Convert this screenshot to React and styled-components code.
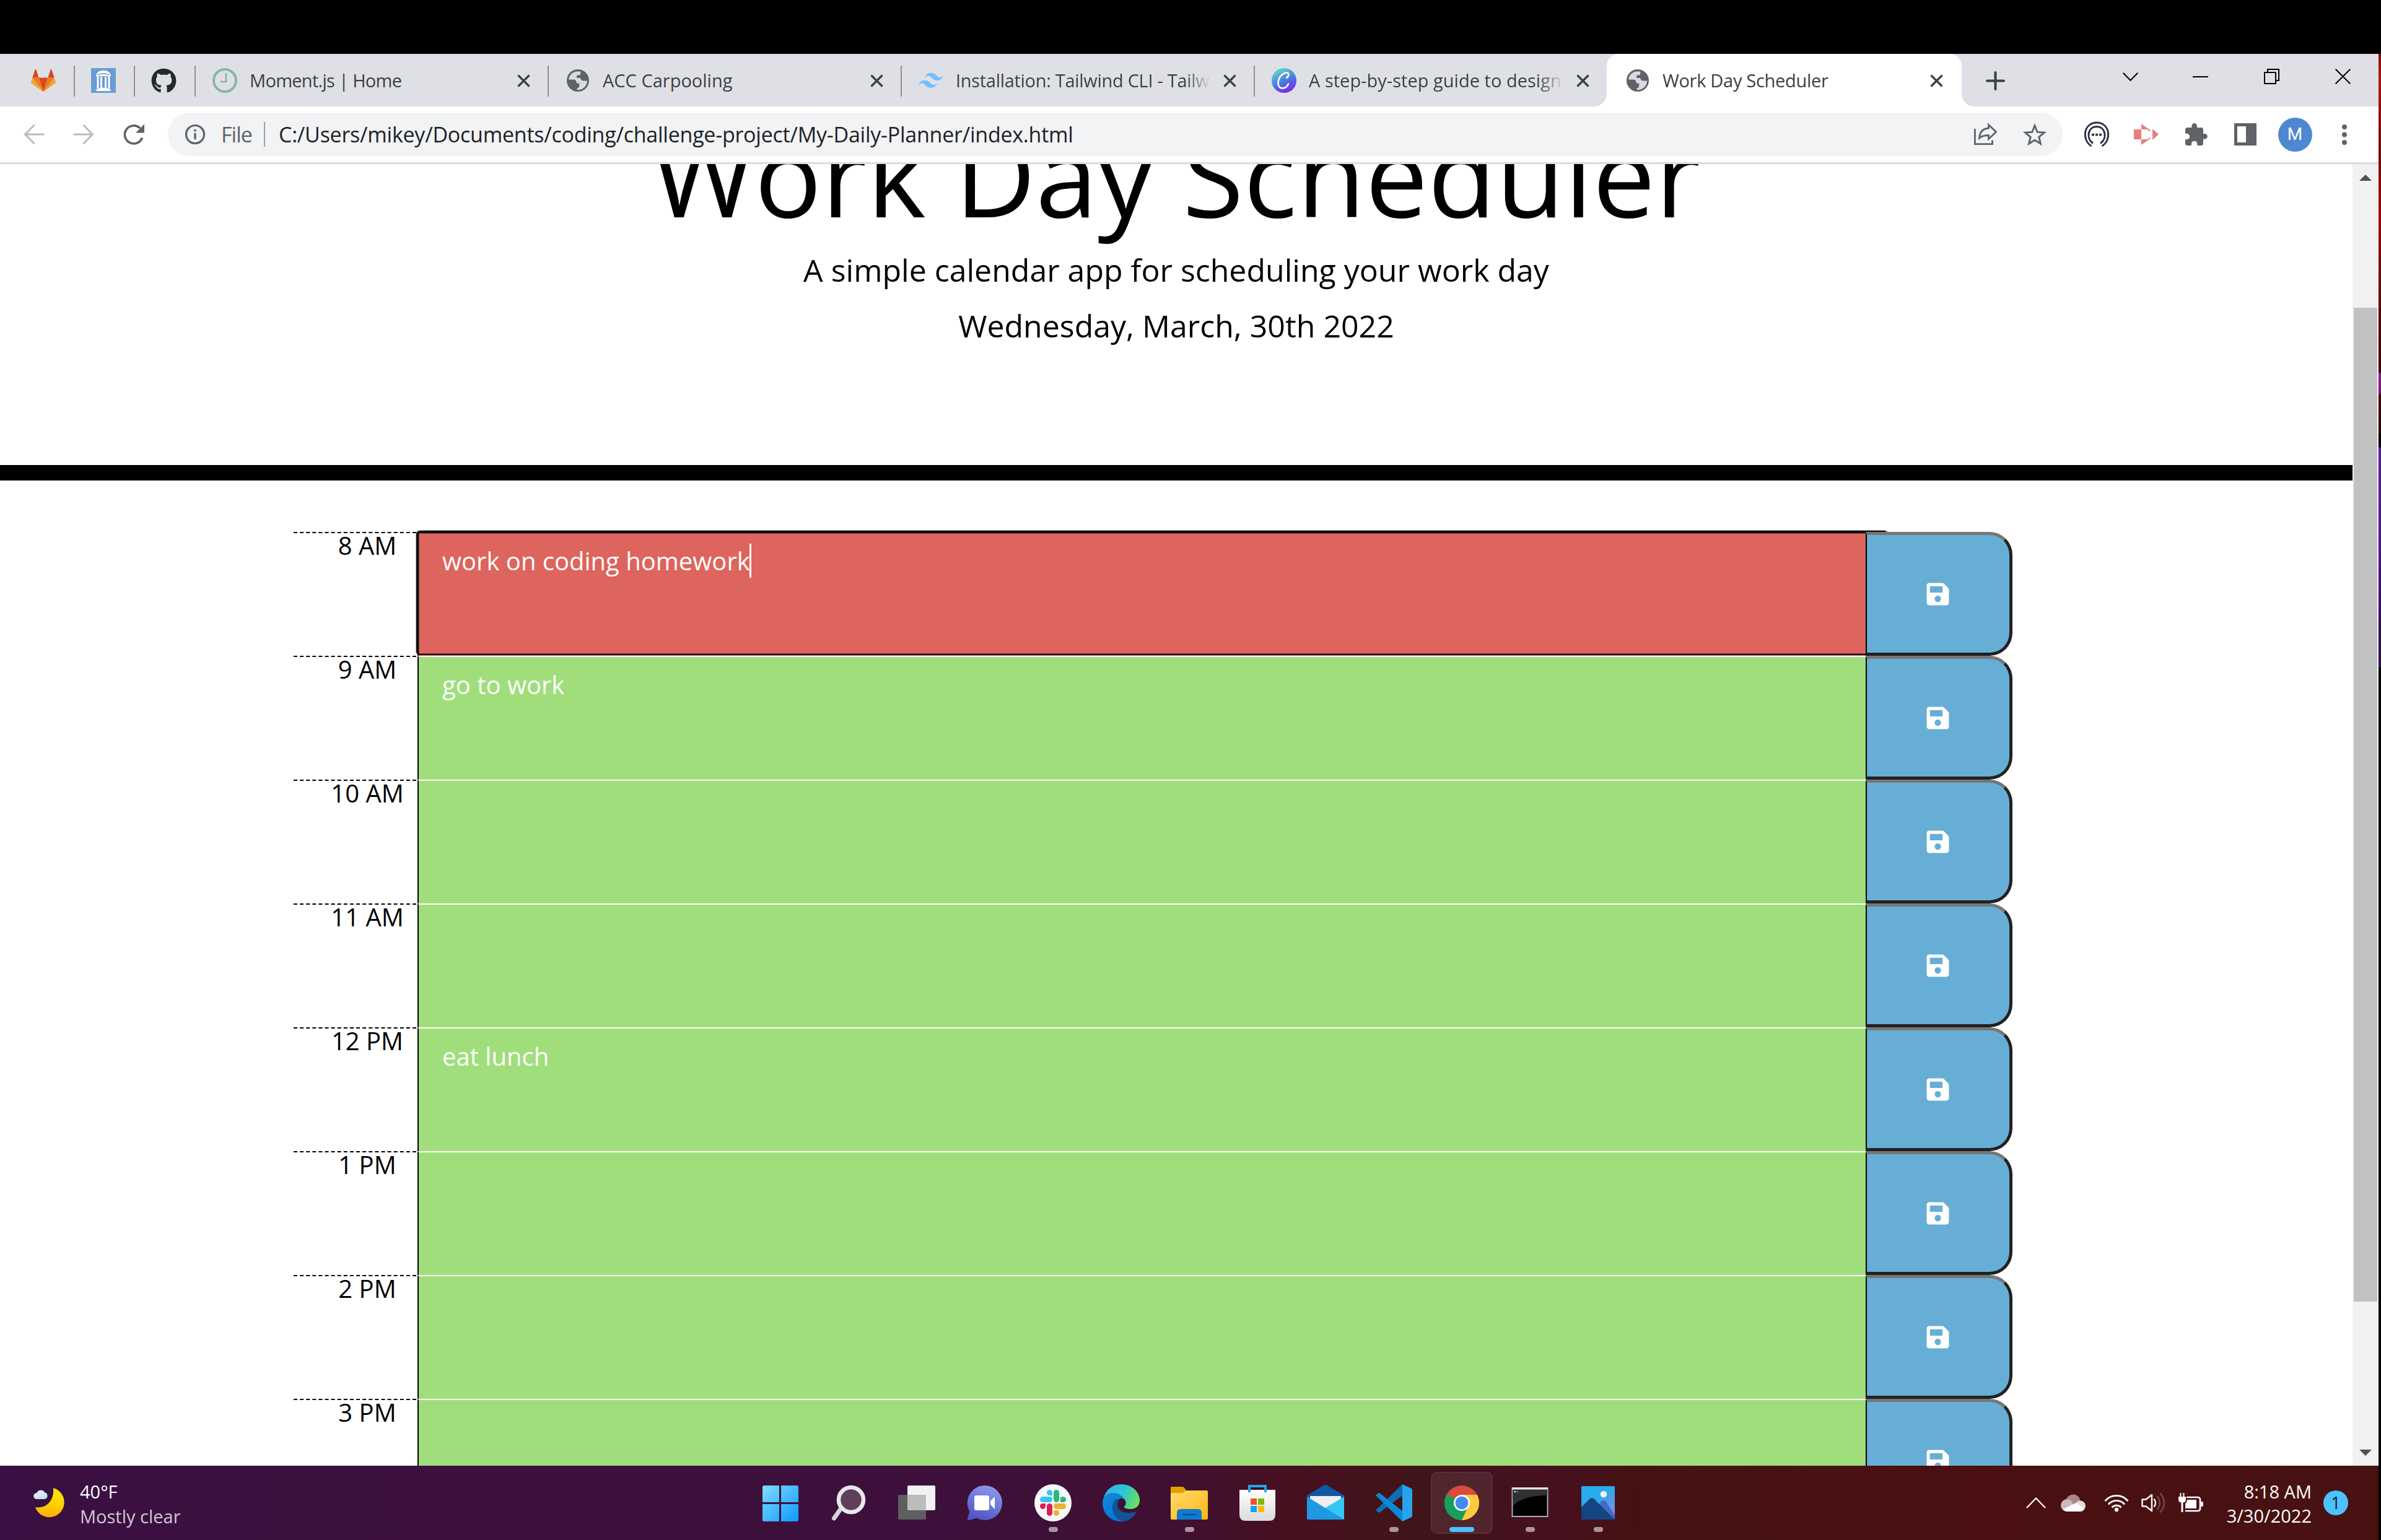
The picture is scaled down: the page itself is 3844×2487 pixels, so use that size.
import React from 'react';
import styled, { createGlobalStyle, css } from 'styled-components';
import { FaSave, FaGithub } from 'react-icons/fa';

const Global = createGlobalStyle`
  *, *::before, *::after { box-sizing: border-box; }
  html, body { margin: 0; padding: 0; background: #000; }
  body { font-family: "Open Sans", "Noto Sans", sans-serif; overflow: hidden; }
  svg { display: block; flex: none; overflow: visible; }
`;

const uiFont = css`
  font-family: "Open Sans", "Noto Sans", sans-serif;
  white-space: pre;
`;

/* ---------- desktop ---------- */
const Desktop = styled.div`
  width: 3844px;
  height: 2487px;
  display: grid;
  grid-template-columns: 3840px 4px;
  grid-template-rows: 87px 2280px 120px;
  overflow: hidden;
  background: #000;
`;
const Letterbox = styled.div`
  grid-column: 1 / -1;
  background: #000;
`;
const WallpaperEdge = styled.div`
  grid-column: 2;
  grid-row: 2 / 4;
  background: linear-gradient(
    #8a0a08 0, #b01a08 40px, #7a0606 150px, #a00c0c 260px, #5a0404 420px, #400404 514px,
    #8a1c90 516px, #7a1878 548px, #450408 551px, #300204 612px, #050005 614px, #050005 634px,
    #5a1c9c 637px, #52148c 800px, #3c0a6a 912px, #341048 915px, #341048 990px, #000 992px
  );
`;

/* ---------- browser ---------- */
const Browser = styled.div`
  display: flex;
  flex-direction: column;
  background: #fff;
  overflow: hidden;
`;
const TabStrip = styled.div`
  height: 85px;
  flex: none;
  display: flex;
  align-items: center;
  background: #dfe0e6;
`;
const PinnedTab = styled.div`
  width: ${(p) => p.$width}px;
  height: 50px;
  margin-top: 3px;
  padding: 0 29px 2px 0;
  display: flex;
  align-items: center;
  justify-content: flex-end;
  border-right: 2px solid #8f9094;
  flex: none;
`;
const Tab = styled.div`
  position: relative;
  flex: none;
  display: flex;
  align-items: center;
  gap: 20px;
  width: ${(p) => (p.$active ? 573 : p.$last ? 568 : 570)}px;
  height: ${(p) => (p.$active ? 85 : 50)}px;
  margin-top: ${(p) => (p.$active ? 0 : 3)}px;
  padding: 0 25px 2px 27px;
  border-right: 2px solid ${(p) => (p.$last ? 'transparent' : '#8f9094')};
  ${(p) =>
    p.$active &&
    css`
      padding: 1px 30px 0 30px;
      border-right: 0;
      background: #fff;
      border-radius: 20px 20px 0 0;
      &::before,
      &::after {
        content: '';
        position: absolute;
        bottom: 0;
        width: 20px;
        height: 20px;
      }
      &::before {
        right: 100%;
        background: radial-gradient(circle at 0 0, transparent 19.5px, #fff 20px);
      }
      &::after {
        left: 100%;
        background: radial-gradient(circle at 100% 0, transparent 19.5px, #fff 20px);
      }
    `}
`;
const TabTitle = styled.span`
  ${uiFont}
  width: 412px;
  flex: none;
  overflow: hidden;
  color: #3c4043;
  font-size: 29px;
  line-height: 44px;
  letter-spacing: ${(p) => p.$track || 0}px;
  ${(p) => p.$fade && css`mask-image: linear-gradient(90deg, #000 370px, transparent 412px);`}
`;
const NewTab = styled.div`
  margin: 0 0 0 39px;
  padding-top: 2px;
`;
const WindowControls = styled.div`
  margin-left: auto;
  align-self: flex-start;
  display: flex;
  height: 73px;
`;
const ControlButton = styled.div`
  width: ${(p) => p.$width || 115}px;
  display: grid;
  place-items: center;
`;

const Toolbar = styled.div`
  height: 93px;
  flex: none;
  display: flex;
  align-items: center;
  border-bottom: 3px solid #dadce0;
  background: #fff;
`;
const NavButtons = styled.div`
  display: flex;
  gap: 40px;
  margin: 0 36px 0 35px;
`;
const Omnibox = styled.div`
  width: 3059px;
  height: 70px;
  padding: 0 5px 0 26px;
  display: flex;
  align-items: center;
  border-radius: 35px;
  background: #f1f3f4;
`;
const Scheme = styled.span`
  ${uiFont}
  width: 48px;
  margin-left: 24px;
  color: #5f6368;
  font-size: 34px;
  line-height: 50px;
  letter-spacing: -1px;
`;
const OmniDivider = styled.span`
  width: 2px;
  height: 40px;
  margin: 0 22px 0 21px;
  background: #9aa0a6;
`;
const Url = styled.span`
  ${uiFont}
  flex: 1;
  color: #202124;
  font-size: 34px;
  line-height: 50px;
  letter-spacing: -0.24px;
`;
const ToolSlot = styled.div`
  width: 80px;
  height: 70px;
  flex: none;
  display: grid;
  place-items: center;
`;
const Extensions = styled.div`
  display: flex;
  margin-left: 15px;
`;
const Avatar = styled.div`
  width: 55px;
  height: 55px;
  border-radius: 50%;
  background: #4f88d1;
  color: #fff;
  font: 28px/54px Roboto, sans-serif;
  text-align: center;
`;

/* ---------- page ---------- */
const Viewport = styled.div`
  flex: 1;
  min-height: 0;
  display: flex;
`;
const Page = styled.main`
  width: 3798px;
  height: 2102px;
  overflow: hidden;
  background: #fff;
  color: #000;
`;
const Scrollbar = styled.div`
  width: 42px;
  display: flex;
  flex-direction: column;
  align-items: center;
  padding: 17px 0 16px;
  background: #f1f1f1;
`;
const Thumb = styled.div`
  width: 38px;
  height: 1605px;
  margin: 205px 0 auto;
  background: #c1c1c1;
`;
const Arrow = styled.div`
  border: 10px solid transparent;
  ${(p) => (p.$down ? 'border-top: 10px solid #505050; border-bottom: 0;' : 'border-bottom: 10px solid #505050; border-top: 0;')}
`;
const Hero = styled.header`
  height: 511px;
  border-bottom: 25px solid #000;
  text-align: center;
  overflow: hidden;
`;
const Title = styled.h1`
  margin: -91px 0 9px;
  font-size: 180px;
  line-height: 216px;
  font-weight: 400;
`;
const Lead = styled.p`
  margin: 0 0 15px;
  font-size: 50px;
  line-height: 75px;
`;
const Planner = styled.section`
  padding: 83px 549px 0 474px;
`;
const TimeBlock = styled.div`
  position: relative;
  height: 200px;
  display: grid;
  grid-template-columns: 200px 2338px 237px;
`;
const Hour = styled.div`
  margin-right: 2px;
  border-top: 2px dashed #000;
  padding: 1px 0 0 40px;
  font-size: 40px;
  line-height: 38px;
  text-align: center;
`;
const Entry = styled.div`
  position: relative;
  border-top: 2px solid #fff;
  border-left: 2px solid #000;
  padding: 17px 38px;
  background: ${(p) => (p.$now ? '#dd655e' : '#a0de7b')};
  color: #fff;
  font-size: 40px;
  line-height: 55px;
`;
const FocusRing = styled.span`
  position: absolute;
  left: -4px;
  top: -4px;
  width: 2376px;
  height: 201px;
  border: 4px solid #101010;
  border-bottom-width: 2px;
  border-radius: 6px;
  box-shadow: 0 0 0 1px rgba(16, 16, 16, 0.35), inset 0 0 0 1px rgba(16, 16, 16, 0.45);
  clip-path: inset(-2px -2px 0 -2px);
`;
const Caret = styled.span`
  display: inline-block;
  width: 3px;
  height: 55px;
  margin-left: -1px;
  vertical-align: top;
  background: #fff;
`;
const SaveButton = styled.button`
  position: relative;
  margin: 0;
  padding: 0 1px 0 0;
  display: grid;
  place-items: center;
  border: 5px solid #212121;
  border-top-color: #767676;
  border-left: 2px solid #000;
  border-radius: 0 37px 37px 0;
  background: #67aed6;
  color: #fff;
`;

/* ---------- taskbar ---------- */
const Taskbar = styled.footer`
  display: grid;
  grid-template-columns: 1205px 1430px 1fr;
  background: linear-gradient(90deg, #391043 0, #3c103d 500px, #3d103c 1500px, #401030 1900px, #471020 2080px, #401518 2300px, #461020 2480px, #451212 2640px, #4a1012 3200px, #471211 3840px);
`;
const Weather = styled.div`
  ${uiFont}
  display: flex;
  align-items: center;
  gap: 26px;
  padding-left: 53px;
  font-size: 29px;
  line-height: 40px;
  color: #fff;
`;
const WeatherText = styled.div`
  display: flex;
  flex-direction: column;
  padding-top: 4px;
`;
const Condition = styled.span`
  color: #d3c5d6;
`;
const Apps = styled.div`
  display: flex;
  align-items: center;
`;
const AppSlot = styled.div`
  width: 100px;
  height: 100px;
  margin: 0 5px;
  padding-top: 20px;
  display: flex;
  flex-direction: column;
  align-items: center;
  border-radius: 10px;
  ${(p) => p.$active && 'background: rgba(255,255,255,.08); box-shadow: inset 0 0 0 2px rgba(255,255,255,.05);'}
`;
const Indicator = styled.i`
  width: ${(p) => (p.$active ? 40 : 15)}px;
  height: 8px;
  margin-top: 9px;
  border-radius: 4px;
  background: ${(p) => (p.$active ? '#4cc2ff' : 'rgba(255,255,255,.55)')};
`;
const Tray = styled.div`
  display: flex;
  align-items: center;
  justify-content: flex-end;
  padding-right: 49px;
`;
const TrayIcons = styled.div`
  display: flex;
  align-items: center;
  gap: ${(p) => p.$gap || 20}px;
`;
const Clock = styled.div`
  ${uiFont}
  width: 155px;
  margin: 0 19px 0 20px;
  padding-top: 1px;
  color: #fff;
  font-size: 29px;
  line-height: 39px;
  text-align: right;
  letter-spacing: 0;
`;
const Badge = styled.div`
  width: 40px;
  height: 40px;
  border-radius: 50%;
  background: #4cc2ff;
  color: #10202c;
  font-size: 27px;
  line-height: 39px;
  text-align: center;
`;

/* ---------- icons ---------- */
const CloseX = () => (
  <svg width="21" height="21" viewBox="0 0 21 21" stroke="#3c4043" strokeWidth="3.4" fill="none">
    <path d="M1.5 1.5 19.5 19.5M19.5 1.5 1.5 19.5" />
  </svg>
);
const Gitlab = () => (
  <svg width="40" height="38" viewBox="0 0 40 38">
    <path d="M20 37.500 27.400 14.600H12.600z" fill="#d8481f" />
    <path d="M20 37.500 12.600 14.600H2.300zM20 37.500l7.400-22.900h10.300z" fill="#ee7a28" />
    <path d="M2.300 14.600.1 21.500a1.600 1.600 0 0 0 .5 1.700L20 37.500zM37.700 14.600l2.200 6.900a1.600 1.600 0 0 1-.5 1.700L20 37.500z" fill="#f0a52b" />
    <path d="M2.300 14.600h10.300L8.200 1.100c-.2-.7-1.200-.7-1.400 0zM37.700 14.600H27.400l4.400-13.500c.2-.7 1.200-.7 1.400 0z" fill="#d8481f" />
  </svg>
);
const Globe = () => (
  <svg width="40" height="40" viewBox="0 0 40 40">
    <circle cx="20" cy="20" r="18" fill="#5f6368" />
    <path fill="#dfe0e6" d="M17 5.4C10.400 6.800 5.600 12 5.200 18.600h7.900c2.600 0 4.600 2 4.600 4.500v1.300h4.500v4.400c0 1.400-.8 2.600-2 3.200l-1.700.8v2.200c6.900.9 12.900-3 15.500-9.200l1.200-5.300h-6.600c-2.400 0-4.400-2-4.400-4.400h-6v-4.600h3.200c1.600 0 2.900-1.300 2.900-2.900V5.400z" opacity=".95" />
  </svg>
);
const Columns = () => (
  <svg width="40" height="40" viewBox="0 0 40 40">
    <rect width="40" height="40" fill="#6a9bd4" />
    <path d="M8 13C8 .5 32 .5 32 13z" fill="#fff" />
    <path d="M10 11q10-4 20 0" stroke="#6a9bd4" strokeWidth="1.500" fill="none" />
    <path d="M11 13v20M16.500 14v19M23.500 14v19M29 13v20" stroke="#fff" strokeWidth="3" />
    <path d="M7 35q13-7 26 0l-3 2H10z" fill="#fff" />
  </svg>
);
const MomentLogo = () => (
  <svg width="40" height="40" viewBox="0 0 40 40" fill="none" stroke="#86b6aa">
    <circle cx="20" cy="20" r="18" strokeWidth="4" />
    <path d="M22 8v14h-9" strokeWidth="2.600" />
  </svg>
);
const TailwindLogo = () => (
  <svg width="40" height="26" viewBox="0 0 54 33" fill="#74bffb">
    <path d="M27 0c-7.200 0-11.700 3.600-13.500 10.800 2.700-3.600 5.850-4.950 9.450-4.050 2.054.513 3.522 2.004 5.147 3.653C30.744 13.090 33.808 16.200 40.500 16.200c7.200 0 11.700-3.600 13.500-10.800-2.700 3.600-5.850 4.950-9.450 4.050-2.054-.513-3.522-2.004-5.147-3.653C36.756 3.110 33.692 0 27 0zM13.500 16.200C6.300 16.200 1.800 19.800 0 27c2.700-3.600 5.850-4.950 9.450-4.050 2.054.514 3.522 2.004 5.147 3.653C17.244 29.290 20.308 32.400 27 32.400c7.200 0 11.700-3.600 13.500-10.800-2.700 3.600-5.850 4.950-9.450 4.050-2.054-.513-3.522-2.004-5.147-3.653C23.256 19.310 20.192 16.200 13.500 16.200z" />
  </svg>
);
const CanvaLogo = () => (
  <svg width="40" height="40" viewBox="0 0 40 40">
    <defs>
      <linearGradient id="cv" x1=".25" y1="0" x2=".7" y2="1">
        <stop offset="0.100" stopColor="#63c8cc" />
        <stop offset=".55" stopColor="#4a78e0" />
        <stop offset="1" stopColor="#7a22f0" />
      </linearGradient>
    </defs>
    <circle cx="20" cy="20" r="20" fill="url(#cv)" />
    <path d="M24 15.500c3-1 5.500-8 .5-8C17 7.500 10.500 16 10.500 24c0 5.500 3 8.500 7 8.500 4.500 0 8-3.500 9.500-7" fill="none" stroke="#fff" strokeWidth="2.600" strokeLinecap="round" />
  </svg>
);
const ArrowIcon = ({ flip }) => (
  <svg width="40" height="40" viewBox="0 0 40 40" fill="none" stroke="#babcbe" strokeWidth="3" transform={flip ? 'scale(-1,1)' : undefined}>
    <path d="M36.500 20H6M20.500 4.800 5.500 20l15 15.200" />
  </svg>
);
const Reload = () => (
  <svg width="40" height="40" viewBox="0 0 40 40">
    <path d="M34.500 25.500A14.500 14.500 0 1 1 31 10" fill="none" stroke="#5f6368" strokeWidth="3.600" />
    <path d="M38 3.500v14H24z" fill="#5f6368" />
  </svg>
);
const Info = () => (
  <svg width="36" height="36" viewBox="0 0 36 36">
    <circle cx="18" cy="18" r="14.500" fill="none" stroke="#5f6368" strokeWidth="3.200" />
    <path d="M16.300 10h3.400v3.400h-3.400zM16.300 16h3.400v10h-3.400z" fill="#5f6368" />
  </svg>
);
const Share = () => (
  <svg width="40" height="38" viewBox="-1 0 40 38" fill="none" stroke="#5f6368" strokeWidth="2.800">
    <path d="M2.400 10v24.600h28.200v-6" />
    <path d="M9.500 25c1-10 6-15.500 15-16V3.500l12 11.500-12 11.500v-6c-7 0-11 1-15 4.500z" strokeLinejoin="miter" />
  </svg>
);
const Star = () => (
  <svg width="38" height="38" viewBox="0 0 38 38" fill="none" stroke="#5f6368" strokeWidth="3">
    <path d="m19 5 4.200 10.200 11 .9-8.400 7.200 2.600 10.700L19 28.300 9.600 34l2.600-10.700-8.400-7.200 11-.9z" />
  </svg>
);
const PodIcon = () => (
  <svg width="42" height="42" viewBox="0 0 42 42" fill="none" stroke="#263040">
    <path d="M12.500 40C-4 30 0 2 21 2s25 28 8.500 38" strokeWidth="2.800" />
    <path d="M15 35.500C3 27 7 8.500 21 8.500S39 27 27 35.500" strokeWidth="3" />
    <path d="M13 21.500h4M19 21.500h4M25 21.500h4" strokeWidth="3.600" />
  </svg>
);
const RedPlay = () => (
  <svg width="40" height="34" viewBox="0 0 40 34" fill="#e57f7e">
    <path d="M0 9h12v16H0zM12 0l13 9H12zM12 34l13-9H12zM30 8l10 9-10 9z" />
    <path d="M12 9h13v5l-4 3 4 3v5H12z" fill="#fff" />
    <path d="m22 9 4 4v-4zM22 25l4-4v4z" />
  </svg>
);
const Puzzle = () => (
  <svg width="38" height="38" viewBox="0 0 38 38" fill="#5f6368">
    <path d="M33.500 18H31v-6.500a3.500 3.500 0 0 0-3.500-3.500H21V5.300a4.300 4.300 0 0 0-8.600 0V8H5.500A3.500 3.500 0 0 0 2 11.500v6.300h2.600a4.600 4.600 0 0 1 0 9.300H2v6.400A3.500 3.500 0 0 0 5.500 37H12v-2.600a4.600 4.600 0 0 1 9.300 0V37h6.200a3.500 3.500 0 0 0 3.500-3.500v-6.900h2.500a4.300 4.300 0 0 0 0-8.600z" />
  </svg>
);
const SidePanel = () => (
  <svg width="36" height="36" viewBox="0 0 36 36">
    <path fillRule="evenodd" d="M0 0h36v36H0zM5 5v26h14V5z" fill="#5f6368" />
  </svg>
);
const Dots = () => (
  <svg width="8" height="33" viewBox="0 0 8 33" fill="#5f6368">
    <circle cx="4" cy="4" r="4" /><circle cx="4" cy="16.500" r="4" /><circle cx="4" cy="29" r="4" />
  </svg>
);
const MoonCloud = () => (
  <svg width="50" height="50" viewBox="0 0 50 50">
    <defs>
      <linearGradient id="mn" x1=".6" y1="0" x2=".5" y2="1"><stop offset=".3" stopColor="#ffe000" /><stop offset="1" stopColor="#ffae00" /></linearGradient>
      <linearGradient id="mc" x1="0" y1="0" x2="1" y2="1"><stop offset="0" stopColor="#f4f6fa" /><stop offset="1" stopColor="#b4dcf5" /></linearGradient>
    </defs>
    <path d="M33 1a24 24 0 1 1-29 31c17 3 31-10 29-31z" fill="url(#mn)" />
    <path d="M6 19a5 5 0 0 1 .5-10 7 7 0 0 1 12.500-1 5.600 5.600 0 0 1 0 11z" fill="url(#mc)" />
  </svg>
);
const App60 = ({ children }) => <svg width="60" height="60" viewBox="0 0 60 60">{children}</svg>;
const WinLogo = () => (
  <App60>
    <defs><linearGradient id="wn" x1="0" y1="0" x2="1" y2="1" ><stop offset="0" stopColor="#80dcff" /><stop offset="1" stopColor="#0d98ff" /></linearGradient></defs>
    <path d="M3.500 2H28v27H1V4.500Q1 2 3.500 2zM31 2h25.500q2.500 0 2.500 2.500V29H31zM1 32h27v28H3.500Q1 60 1 57.500zM31 32h28v25.500q0 2.500-2.500 2.500H31z" fill="url(#wn)" />
  </App60>
);
const SearchGlass = () => (
  <App60>
    <path d="M17 40 6.500 55" stroke="#d3d6dc" strokeWidth="7" strokeLinecap="round" />
    <circle cx="34" cy="25" r="20" fill="#5f3f5c" stroke="#e6e8ec" strokeWidth="6.500" />
  </App60>
);
const TaskView = () => (
  <App60>
    <rect x="0" y="17" width="45" height="40" rx="2" fill="#5e5e5e" />
    <rect x="15" y="2" width="45" height="40" rx="2" fill="#f2f2f2" />
    <path d="M15 17h30v25H17q-2 0-2-2z" fill="#bcbcbc" />
  </App60>
);
const Chat = () => (
  <App60>
    <defs><linearGradient id="ch" x1=".8" y1="0" x2=".4" y2="1"><stop offset="0" stopColor="#8f9cec" /><stop offset="1" stopColor="#5056c6" /></linearGradient></defs>
    <path d="M30 2a28 28 0 1 1-13 52.800L4 58q-3 0-2-3l3.500-11A28 28 0 0 1 30 2z" fill="url(#ch)" />
    <rect x="13" y="18" width="24" height="24" rx="3" fill="#fff" />
    <path d="m39 27 7-7v20l-7-7z" fill="#fff" />
  </App60>
);
const Slack = () => (
  <App60>
    <circle cx="30" cy="30" r="30" fill="#f8f8f8" />
    <g strokeWidth="9" strokeLinecap="round">
      <path d="M13.500 24.500h11" stroke="#36c5f0" /><path d="M24.500 13.500h0" stroke="#36c5f0" />
      <path d="M35.500 13.500v11" stroke="#2eb67d" /><path d="M46.500 24.500h0" stroke="#2eb67d" />
      <path d="M46.500 35.500h-11" stroke="#ecb22e" /><path d="M35.500 46.500h0" stroke="#ecb22e" />
      <path d="M24.500 46.500v-11" stroke="#e01e5a" /><path d="M13.500 35.500h0" stroke="#e01e5a" />
    </g>
    <path d="M24.500 13.500h4.500v4.500h-4.500z" fill="#36c5f0" /><path d="M42 20v9h4.500v-4.500z" fill="#2eb67d" />
    <path d="M31 42h9l-4.500 4.500H31z" fill="#ecb22e" /><path d="M18 31v4.500l-4.500 0V31z" fill="#e01e5a" />
  </App60>
);
const Edge = () => (
  <App60>
    <defs>
      <linearGradient id="e1" x1="0" y1=".3" x2="1" y2=".6"><stop offset="0" stopColor="#35b5f5" /><stop offset=".5" stopColor="#2cc3d6" /><stop offset="1" stopColor="#66e35a" /></linearGradient>
      <linearGradient id="e2" x1="0" y1="0" x2=".3" y2="1"><stop offset="0" stopColor="#1389d6" /><stop offset="1" stopColor="#0078d7" /></linearGradient>
    </defs>
    <path d="M1 25C5 8 17 0 30 0c17 0 30 12 30 26 0 9-7 14-14 14-8 0-12-2-11-4 4-4 3-9 0-12L22 16z" fill="url(#e1)" />
    <path d="M0 30c0-11 8-16 17-16 10 0 15 5 17 9-7-2-10 4-10 11 0 10 4 20 10 26C14 62 0 48 0 30z" fill="url(#e2)" />
    <path d="M16 36c0-9 6-13 13-13-4 3-6 7-5 12 2 9 14 14 31 9-4 9-13 16-24 16-9-3-15-13-15-24z" fill="#0f5499" />
  </App60>
);
const Folder = () => (
  <App60>
    <defs><linearGradient id="fo" x1="0" y1="0" x2="1" y2="1"><stop offset="0" stopColor="#ffdb6e" /><stop offset="1" stopColor="#fdb813" /></linearGradient></defs>
    <path d="M0 5q0-1 1.500-1H19q2 0 3 1.500l4 6L20 16H0z" fill="#dfa000" />
    <path d="M0 14h19l6-4h33q2 0 2 2v43q0 2-2 2H2q-2 0-2-2z" fill="url(#fo)" />
    <path d="M10 57V46q0-6 6-6h28q6 0 6 6v11z" fill="#0f7ad0" />
    <path d="M19 49h22" stroke="#07518f" strokeWidth="2.400" />
  </App60>
);
const Store = () => (
  <App60>
    <defs><linearGradient id="st" x1="0" y1="0" x2="0" y2="1"><stop offset="0" stopColor="#fff" /><stop offset="1" stopColor="#d9dadb" /></linearGradient></defs>
    <path d="M1 10q0-1 1-1h56q1 0 1 1v39q0 10-10 10H11Q1 59 1 49z" fill="url(#st)" />
    <path d="M17 13V3h26v10" fill="none" stroke="#1fa8ee" strokeWidth="4" />
    <path d="M19 23h10v10H19z" fill="#f25022" /><path d="M31 23h10v10H31z" fill="#7fba00" />
    <path d="M19 35h10v10H19z" fill="#00a4ef" /><path d="M31 35h10v10H31z" fill="#ffb900" />
  </App60>
);
const Mail = () => (
  <App60>
    <path d="M0 18 27 2q3-2 6 0l27 16v10H0z" fill="#0d59a8" />
    <path d="M5 19h50v10L30 48 5 29z" fill="#f0f0f0" />
    <path d="M60 20v37L28 39z" fill="#37c6f4" />
    <path d="M0 20 60 57H2q-2 0-2-2z" fill="#1e9ae4" />
  </App60>
);
const VsCode = () => (
  <App60>
    <path d="M1 42 44 0v18L7 46q-2 0-6-4z" fill="#0c6fb5" />
    <path d="M1 18 44 60V43L7 14q-2 0-6 4z" fill="#0a8ad6" />
    <path d="M44 0 58 6.500q2 1 2 3v41q0 2-2 3L44 60z" fill="#27a3ee" />
  </App60>
);
const Chrome = () => (
  <App60>
    <circle cx="30" cy="30" r="28" fill="#da4a3f" />
    <path d="M5.700 16A28 28 0 0 0 30 58l12.400-21.500L30 30H14z" fill="#189f5b" />
    <path d="M30 58A28 28 0 0 0 54.800 17H30l13 13z" fill="#fecb3f" />
    <path d="m5.700 16 13 20L30 17z" fill="#da4a3f" /><path d="M5.700 16 18.500 38l6 6L30 30z" fill="#189f5b" />
    <circle cx="30" cy="30" r="13" fill="#fff" /><circle cx="30" cy="30" r="10.500" fill="#4788f4" />
  </App60>
);
const Terminal = () => (
  <App60>
    <rect x="1.500" y="6" width="57" height="46" fill="#000" stroke="#a8aeb8" strokeWidth="2" />
    <path d="M2 6h56v12C32 18 12 24 3 35z" fill="#303030" />
    <path d="M1 5h58v3.500H1z" fill="#dfe3ea" />
    <path d="M4 11h4v2H4zM9 12h2v1H9z" fill="#bbb" />
  </App60>
);
const Photos = () => (
  <App60>
    <defs><linearGradient id="ph" x1=".3" y1="0" x2="1" y2="1"><stop offset=".3" stopColor="#29abec" /><stop offset="1" stopColor="#9487e2" /></linearGradient></defs>
    <rect x="3" y="3" width="54" height="54" rx="2" fill="url(#ph)" />
    <path d="m27 40 8-12q4-4 8 0l14 22v7z" fill="#4468cb" />
    <path d="M3 37 16 24q4-4 8 0l33 33H5q-2 0-2-2z" fill="#134583" />
    <circle cx="39" cy="16" r="5.300" fill="#f2f2f2" />
  </App60>
);
const TrayUp = () => (
  <svg width="32" height="18" viewBox="0 0 32 18" fill="none" stroke="#fff" strokeWidth="2.200"><path d="m1 17 15-15.500 15 15.500" /></svg>
);
const OneDrive = () => (
  <svg width="40" height="28" viewBox="0 0 40 28">
    <circle cx="20" cy="12" r="11.500" fill="#a88787" />
    <circle cx="10" cy="18" r="10" fill="#cdb9b9" />
    <circle cx="31.500" cy="19" r="8.500" fill="#e6dcdc" />
    <path d="M4 24 25 14l13 10q-2 4-7 4H10q-4 0-6-4z" fill="#fff" />
  </svg>
);
const Wifi = () => (
  <svg width="40" height="30" viewBox="0 0 40 30" fill="none" stroke="#fff" strokeWidth="2.800">
    <path d="M1.500 12a24 24 0 0 1 37 0M7 17.500a17 17 0 0 1 26 0M12.500 22.500a10 10 0 0 1 15 0" />
    <circle cx="20" cy="26" r="3.200" fill="#fff" stroke="none" />
  </svg>
);
const Volume = () => (
  <svg width="40" height="34" viewBox="0 0 40 34" fill="none" stroke="#fff" strokeWidth="2.400">
    <path d="M1.500 11.500h6L17 4v26l-9.500-7.500h-6zM20.500 10.500q5 6.500 0 13" strokeLinejoin="round" />
    <path d="M25.500 6q8.500 11 0 22M30.500 1.500q13 15.500 0 31" opacity=".25" />
  </svg>
);
const Battery = () => (
  <svg width="40" height="32" viewBox="0 0 40 32">
    <path d="M13 7h18q4 0 4 4v14q0 4-4 4H11" fill="none" stroke="#fff" strokeWidth="2.600" />
    <path d="M14 11h15v14H11v-8q3-2 3-6zM36 14h2q2 0 2 2v4q0 2-2 2h-2z" fill="#fff" />
    <path d="M0 6h12v5q0 4-4.500 4.500V31h-3V15.500Q0 15 0 11zM2.500 0h2v7h-2zM7.500 0h2v7h-2z" fill="#fff" />
  </svg>
);

/* ---------- data ---------- */
const tabs = [
  { icon: <MomentLogo />, title: 'Moment.js | Home', track: -0.7 },
  { icon: <Globe />, title: 'ACC Carpooling', track: 0 },
  { icon: <TailwindLogo />, title: 'Installation: Tailwind CLI - Tailwind CSS', track: -0.3, fade: true },
  { icon: <CanvaLogo />, title: 'A step-by-step guide to designing', track: 0.02, fade: true, last: true },
  { icon: <Globe />, title: 'Work Day Scheduler', track: -0.3, active: true },
];
const blocks = [
  ['8 AM', 'work on coding homework', true],
  ['9 AM', 'go to work'],
  ['10 AM', ''],
  ['11 AM', ''],
  ['12 PM', 'eat lunch'],
  ['1 PM', ''],
  ['2 PM', ''],
  ['3 PM', ''],
];
const apps = [
  [WinLogo], [SearchGlass], [TaskView], [Chat], [Slack, 'open'], [Edge], [Folder, 'open'],
  [Store], [Mail], [VsCode, 'open'], [Chrome, 'active'], [Terminal, 'open'], [Photos, 'open'],
];

export default function App() {
  return (
    <>
      <Global />
      <Desktop>
        <Letterbox />
        <Browser>
          <TabStrip>
            <PinnedTab $width={121}><Gitlab /></PinnedTab>
            <PinnedTab $width={97}><Columns /></PinnedTab>
            <PinnedTab $width={98}><FaGithub size={41} color="#24292e" /></PinnedTab>
            {tabs.map((t) => (
              <Tab key={t.title} $active={t.active} $last={t.last}>
                {t.icon}
                <TabTitle $track={t.track} $fade={t.fade}>{t.title}</TabTitle>
                <CloseX />
              </Tab>
            ))}
            <NewTab>
              <svg width="31" height="31" viewBox="0 0 31 31" stroke="#3c4043" strokeWidth="4" strokeLinecap="round"><path d="M15.500 2v27M2 15.500h27" /></svg>
            </NewTab>
            <WindowControls>
              <ControlButton $width={111}><svg width="25" height="14" viewBox="0 0 25 14" fill="none" stroke="#000" strokeWidth="2"><path d="m.7.7 11.800 12 11.800-12" /></svg></ControlButton>
              <ControlButton><svg width="25" height="2" viewBox="0 0 25 2"><path d="M0 0h25v2H0z" /></svg></ControlButton>
              <ControlButton><svg width="25" height="25" viewBox="0 0 25 25" fill="none" stroke="#000" strokeWidth="2"><path d="M1 6h18v18H1zM6 6V1h18v18h-5" /></svg></ControlButton>
              <ControlButton><svg width="25" height="25" viewBox="0 0 25 25" stroke="#000" strokeWidth="2"><path d="m.7.7 23.600 23.600M24.300.7.7 24.300" /></svg></ControlButton>
            </WindowControls>
          </TabStrip>
          <Toolbar>
            <NavButtons><ArrowIcon /><ArrowIcon flip /><Reload /></NavButtons>
            <Omnibox>
              <Info />
              <Scheme>File</Scheme>
              <OmniDivider />
              <Url>C:/Users/mikey/Documents/coding/challenge-project/My-Daily-Planner/index.html</Url>
              <ToolSlot><Share /></ToolSlot>
              <ToolSlot><Star /></ToolSlot>
            </Omnibox>
            <Extensions>
              <ToolSlot><PodIcon /></ToolSlot>
              <ToolSlot><RedPlay /></ToolSlot>
              <ToolSlot><Puzzle /></ToolSlot>
              <ToolSlot><SidePanel /></ToolSlot>
              <ToolSlot><Avatar>M</Avatar></ToolSlot>
              <ToolSlot><Dots /></ToolSlot>
            </Extensions>
          </Toolbar>
          <Viewport>
            <Page>
              <Hero>
                <Title>Work Day Scheduler</Title>
                <Lead>A simple calendar app for scheduling your work day</Lead>
                <Lead>Wednesday, March, 30th 2022</Lead>
              </Hero>
              <Planner>
                {blocks.map(([hour, text, now]) => (
                  <TimeBlock key={hour}>
                    <Hour>{hour}</Hour>
                    <Entry $now={now}>{now && <FocusRing />}{text}{now && <Caret />}</Entry>
                    <SaveButton><FaSave size={41} /></SaveButton>
                  </TimeBlock>
                ))}
              </Planner>
            </Page>
            <Scrollbar><Arrow /><Thumb /><Arrow $down /></Scrollbar>
          </Viewport>
        </Browser>
        <WallpaperEdge />
        <Taskbar>
          <Weather>
            <MoonCloud />
            <WeatherText><span>40°F</span><Condition>Mostly clear</Condition></WeatherText>
          </Weather>
          <Apps>
            {apps.map(([Icon, state], i) => (
              <AppSlot key={i} $active={state === 'active'}>
                <Icon />
                {state && <Indicator $active={state === 'active'} />}
              </AppSlot>
            ))}
          </Apps>
          <Tray>
            <TrayIcons $gap={30}>
              <TrayIcons $gap={24}><TrayUp /><OneDrive /></TrayIcons>
              <TrayIcons><Wifi /><Volume /><Battery /></TrayIcons>
            </TrayIcons>
            <Clock>8:18 AM{'\n'}3/30/2022</Clock>
            <Badge>1</Badge>
          </Tray>
        </Taskbar>
      </Desktop>
    </>
  );
}
